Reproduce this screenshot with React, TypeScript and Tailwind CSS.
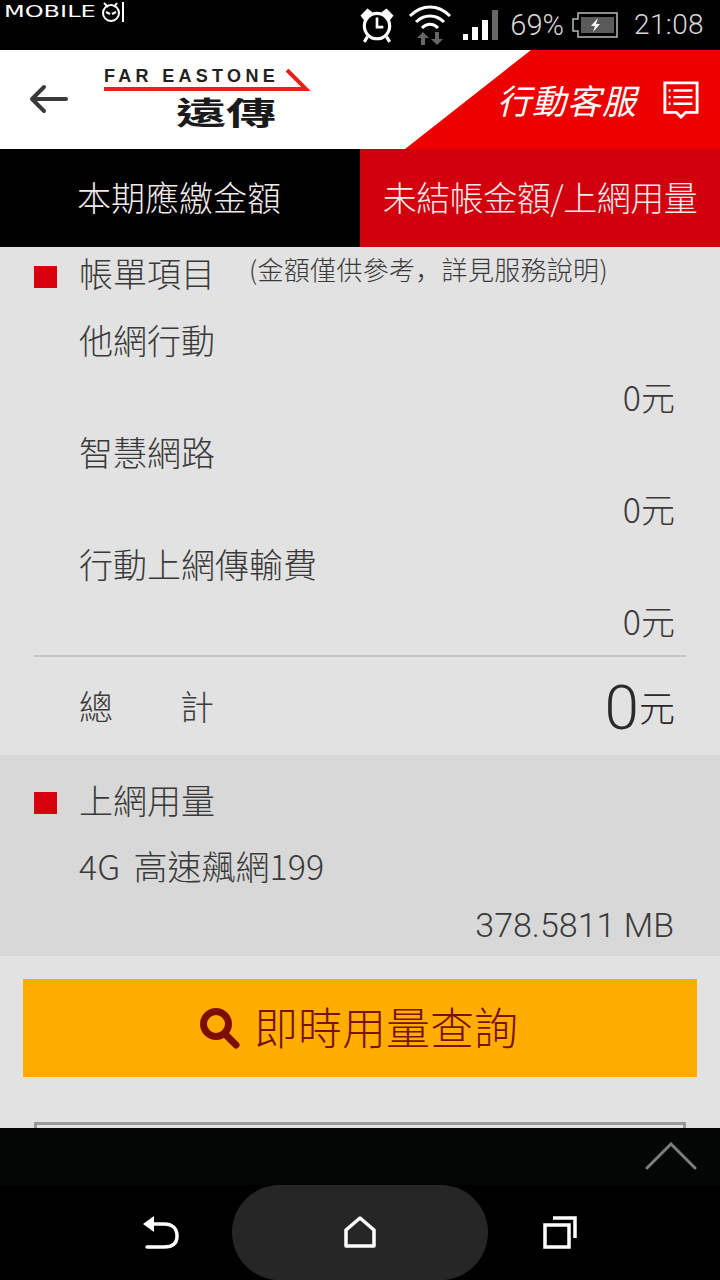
const cjk = "font-['Noto_Sans_CJK_TC','Noto_Sans_CJK_JP',sans-serif]";

function ChargeRow({ name }: { name: string }) {
  return (
    <div className="h-[112px] pl-[79px] pr-[45px] text-[34px] leading-[56px] font-light">
      <div className="h-[57px]">{name}</div>
      <div className="h-[55px] text-right">0元</div>
    </div>
  );
}

function Bullet() {
  return <div className="w-[23px] h-[22px] mt-[3px] bg-[#d9000d] shrink-0" />;
}

function StatusBar() {
  return (
    <div className="h-[50px] bg-black flex items-center text-[#d8d8d8] shrink-0 relative">
      <div className="absolute left-[4px] top-[1px] flex items-center text-white">
        <span className="font-['DejaVu_Sans',sans-serif] text-[16px] leading-[22px] scale-x-[1.5] origin-left w-[96px]">MOBILE</span>
        <svg viewBox="0 0 26 22" className="w-[26px] h-[22px]" fill="none" stroke="#fff" strokeWidth="2">
          <circle cx="11" cy="12" r="8" />
          <path d="M4 2l4 4M17 2l-3 4" />
          <path d="M6 11l4 2M16 11l-4 2" />
          <path d="M23 1v20" />
        </svg>
      </div>
      <div className="ml-auto flex items-center">
        <svg viewBox="0 0 36 36" className="w-[38px] h-[38px] mr-[12px]" fill="none" stroke="#fff" strokeWidth="3">
          <circle cx="18" cy="19" r="12" />
          <path d="M18 11v9h6" strokeWidth="2.5" />
          <path d="M3 9l6-6 4 3-7 7zM33 9l-6-6-4 3 7 7z" fill="#fff" strokeWidth="1" />
          <path d="M9 29l-3 5M27 29l3 5" />
        </svg>
        <svg viewBox="0 0 44 44" className="w-[44px] h-[44px] mr-[11px]" fill="none">
          <path d="M2 13C14 1 30 1 42 13M8 19C16 11 28 11 36 19M14 25C19 20 25 20 30 25" stroke="#fff" strokeWidth="3" />
          <path d="M15 29l-6 6h4v7h4v-7h4zM29 42l6-6h-4v-7h-4v7h-4z" fill="#666" />
        </svg>
        <svg viewBox="0 0 38 32" className="w-[38px] h-[32px] mr-[9px]">
          <rect x="0" y="25" width="5" height="6" fill="#fff" />
          <rect x="9" y="18" width="6" height="13" fill="#fff" />
          <rect x="19" y="11" width="6" height="20" fill="#fff" />
          <rect x="29" y="1" width="6" height="30" fill="#666" />
        </svg>
        <span className="font-['Roboto',sans-serif] font-light text-[29px] leading-[50px] mr-[8px]">69%</span>
        <svg viewBox="0 0 46 26" className="w-[46px] h-[26px] mr-[16px]" fill="none">
          <path d="M6 1h39v24H6v-6H1V7h5z" stroke="#bbb" strokeWidth="1.5" />
          <rect x="9" y="5" width="33" height="16" fill="#5a5a5a" />
          <path d="M26 6l-7 8h4l-2 6 7-8h-4z" fill="#fff" />
        </svg>
        <span className="font-['Roboto',sans-serif] font-light text-[28px] leading-[50px] mr-[16px] tracking-[0.4px]">21:08</span>
      </div>
    </div>
  );
}

function Header() {
  return (
    <div className="h-[99px] bg-white flex shrink-0 relative overflow-hidden">
      <svg viewBox="0 0 315 99" className="absolute right-0 top-0 w-[315px] h-[99px]">
        <polygon points="126,0 315,0 315,99 0,99" fill="#ec0000" />
      </svg>
      <svg viewBox="0 0 40 30" className="w-[40px] h-[30px] ml-[29px] mt-[34px]" fill="none" stroke="#3a3a3a" strokeWidth="4" strokeLinecap="round" strokeLinejoin="round">
        <path d="M37 15H3M15 3L3 15l12 12" />
      </svg>
      <div className="relative ml-[35px] mt-[16px] w-[206px]">
        <div className="font-['Liberation_Sans',sans-serif] font-bold text-[18px] leading-[20px] tracking-[4.3px] text-[#222] whitespace-nowrap">FAR EASTONE</div>
        <svg viewBox="0 0 206 22" className="absolute left-0 top-[3px] w-[206px] h-[22px]" fill="none" stroke="#e2231a" strokeWidth="4">
          <path d="M0 20h202L183 1" />
        </svg>
        <div className={`${cjk} font-bold text-[50px] leading-[50px] text-[#1a1a1a] mt-[9px] ml-[72px] scale-y-[0.62] origin-top whitespace-nowrap`}>遠傳</div>
      </div>
      <div className="relative ml-auto mr-[21px] mt-[30px] flex items-start gap-[26px] text-white">
        <span className={`${cjk} italic text-[34px] leading-[40px] font-normal tracking-[1px] whitespace-nowrap`}>行動客服</span>
        <svg viewBox="0 0 38 40" className="w-[36px] h-[38px] mt-[1px]" fill="none" stroke="#fff" strokeWidth="3">
          <path d="M2 2h34v31H24l-5 5-5-5H2z" />
          <path d="M11 10h20M11 17h20M11 24h20M6 10h2M6 17h2M6 24h2" strokeWidth="2.5" />
        </svg>
      </div>
    </div>
  );
}

function Tabs() {
  return (
    <div className="grid grid-cols-2 h-[98px] shrink-0 text-[34px] text-[#f2e9e9] leading-[96px] text-center font-light">
      <div className="bg-black whitespace-nowrap pr-[2px]">本期應繳金額</div>
      <div className="bg-[#d1000c] whitespace-nowrap tracking-[-0.5px]">未結帳金額/上網用量</div>
    </div>
  );
}

function BottomBars() {
  return (
    <>
      <div className="h-[57px] bg-[#040505] shrink-0 flex justify-end pr-[23px] pt-[14px]">
        <svg viewBox="0 0 52 28" className="w-[52px] h-[28px]" fill="none" stroke="#7d7d7d" strokeWidth="3" strokeLinecap="round">
          <path d="M2 26L26 2l24 24" />
        </svg>
      </div>
      <div className="h-[95px] bg-black shrink-0 flex items-start justify-center relative overflow-hidden">
        <div className="w-[256px] h-[95px] bg-[#262626] rounded-[48px] flex justify-center pt-[31px]">
          <svg viewBox="0 0 32 32" className="w-[32px] h-[32px]" fill="none" stroke="#fff" strokeWidth="3.5" strokeLinejoin="round">
            <path d="M2 30V14L16 2l14 12v16z" />
          </svg>
        </div>
        <svg viewBox="0 0 36 33" className="absolute left-[143px] top-[31px] w-[36px] h-[33px]" fill="none" stroke="#fff" strokeWidth="3.5" strokeLinecap="round">
          <path d="M8 8h13c8 0 13 4 13 12s-5 11-13 11H4" />
          <path d="M11 0v16L0 8z" fill="#fff" stroke="none" />
        </svg>
        <svg viewBox="0 0 34 33" className="absolute left-[543px] top-[31px] w-[34px] h-[33px]" fill="none" stroke="#fff" strokeWidth="3.5">
          <rect x="2" y="9" width="24" height="22" />
          <path d="M10 2h22v20" />
        </svg>
      </div>
    </>
  );
}

export default function App() {
  return (
    <div className={`w-[720px] h-[1280px] flex flex-col overflow-hidden bg-[#e2e2e2] text-[#3a3a3a] ${cjk}`}>
      <StatusBar />
      <Header />
      <Tabs />
      <main className="flex-1 overflow-hidden">
        <div className="flex items-center h-[56px] pl-[34px]">
          <Bullet />
          <span className="ml-[22px] mb-[4px] text-[34px] font-light leading-[52px]">帳單項目</span>
          <span className="ml-[34px] -mt-[12px] text-[26px] font-light leading-[40px] tracking-[0.3px] whitespace-nowrap font-['Noto_Sans_CJK_SC',sans-serif]">(金額僅供參考{"\uFF0C"}詳見服務說明)</span>
        </div>
        <div className="mt-[9px]">
          <ChargeRow name="他網行動" />
          <ChargeRow name="智慧網路" />
          <ChargeRow name="行動上網傳輸費" />
        </div>
        <div className="mx-[34px] mt-[7px] border-t-2 border-[#c4c4c4] h-[100px] flex items-center justify-between pr-[11px] pl-[45px]">
          <div className="flex mb-[2px] text-[34px] font-light w-[135px] justify-between">
            <span>總</span>
            <span>計</span>
          </div>
          <div className="flex items-center text-[#2a2a2a]">
            <span className="text-[62px] leading-[80px] mt-[4px] font-['Roboto',sans-serif] font-light">0</span>
            <span className="text-[36px] font-light">元</span>
          </div>
        </div>
        <div className="bg-[#d8d8d8] h-[201px]">
          <div className="flex items-center h-[92px] pl-[34px]">
            <Bullet />
            <span className="ml-[22px] mb-[4px] text-[34px] font-light">上網用量</span>
          </div>
          <div className="pl-[79px] text-[34px] font-light leading-[44px] -mt-[3px] whitespace-nowrap [word-spacing:6px]">4G 高速飆網199</div>
          <div className="pr-[46px] text-right text-[34px] font-light leading-[44px] mt-[15px] font-['Roboto',sans-serif]">378.5811 MB</div>
        </div>
        <button className="mt-[23px] ml-[23px] w-[674px] h-[98px] bg-[#ffae00] flex items-center justify-center pr-[3px] text-[#7a1200] text-[44px] font-light">
          <svg viewBox="0 0 42 42" className="w-[42px] h-[42px] mr-[13px]" fill="none" stroke="#7a0f00" strokeWidth="7" strokeLinecap="round">
            <circle cx="17" cy="17" r="12.5" />
            <path d="M27 28l10 10" />
          </svg>
          <span className="mb-[4px]">即時用量查詢</span>
        </button>
        <div className="mt-[45px] mx-[34px] h-[20px] border-[3px] border-b-0 border-[#999]" />
      </main>
      <BottomBars />
    </div>
  );
}
